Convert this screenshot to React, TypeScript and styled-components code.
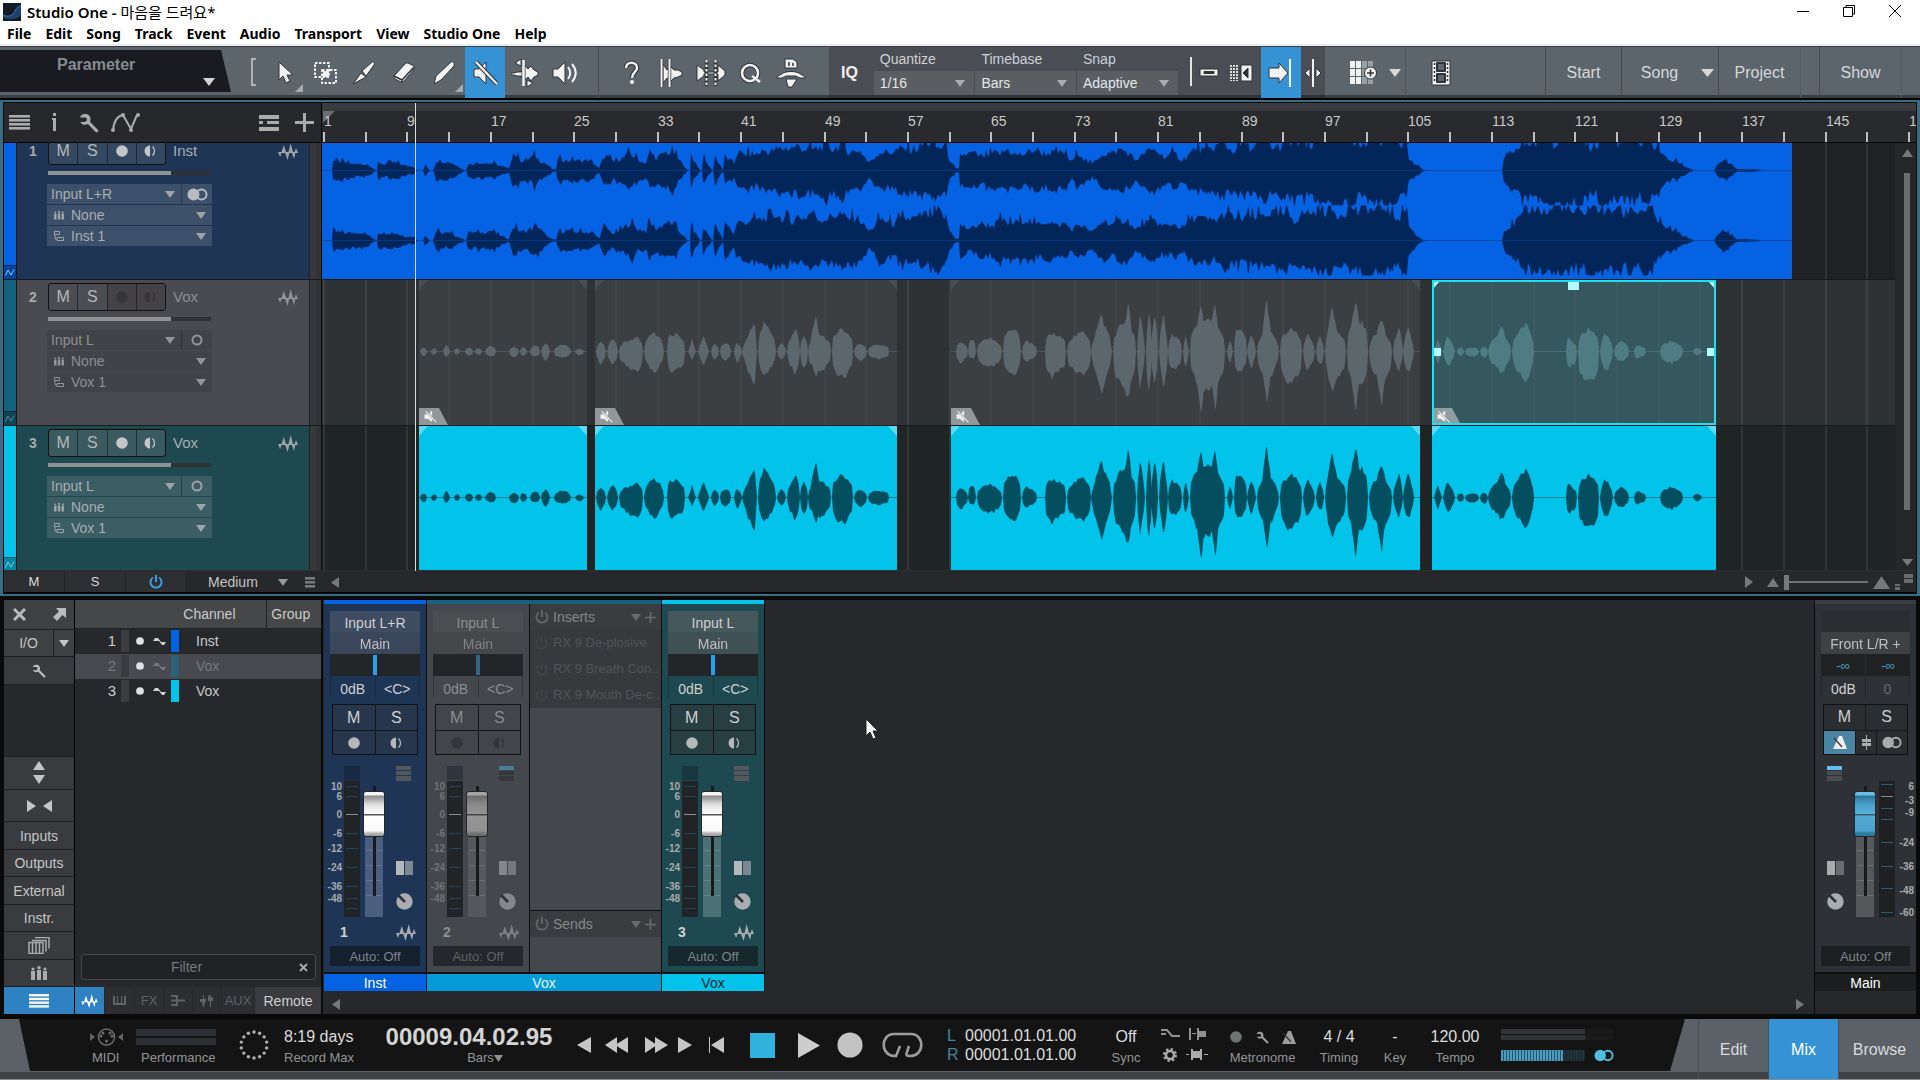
import React from "react";
import styled, { createGlobalStyle, css } from "styled-components";

const sans = `"Liberation Sans", Arial, "Noto Sans CJK KR", sans-serif`;

const GlobalStyle = createGlobalStyle`
  *, *::before, *::after { box-sizing: border-box; }
  body { margin: 0; background: #0c0c0d; }
  button, input, select { font: inherit; color: inherit; margin: 0; padding: 0; border: 0; border-radius: 0; background: none; }
  select { appearance: none; outline: none; min-width: 0; }
  svg { display: block; flex: none; }
`;

/* ---------- timeline data ---------- */

type Blob = [number, number, number, number, number?, number?];
type ClipData = { start: number; end: number; blobs: Blob[]; selected?: boolean };

const PX_PER_STEP = 83.42; // eight bars
const stepX = (n: number) => Math.round(1 + n * PX_PER_STEP);

const voxClips: ClipData[] = [
  {
    start: 97, end: 265,
    blobs: [[98, 105, 5, 5], [109, 115, 4, 4], [121, 128, 8, 7, 0.5, 0.6], [132, 138, 4, 4], [143, 151, 5, 5], [153, 160, 4, 4], [163, 174, 6, 6], [187, 197, 5, 6], [198, 205, 5, 5], [208, 218, 7, 6], [219, 228, 9, 10, 0.5, 0.5], [232, 249, 8, 8], [253, 262, 3, 4]],
  },
  {
    start: 273, end: 575,
    blobs: [[274, 284, 11, 15, 0.5, 0.5], [285, 296, 14, 15, 0.5, 0.5], [297, 321, 16, 22, 0.75], [322, 342, 22, 24, 0.5, 0.45], [345, 363, 21, 23, 0.3, 0.25], [366, 374, 13, 10, 0.5, 1], [376, 387, 18, 16, 0.5, 0.8], [389, 397, 9, 9, 0.5, 0.5], [398, 409, 10, 10], [412, 420, 10, 12, 0.4, 0.6], [420, 435, 33, 40, 0.85, 0.8], [436, 454, 32, 27, 0.35, 0.45], [455, 464, 10, 10, 0.5, 0.6], [465, 478, 25, 25, 0.65, 0.5], [478, 486, 17, 18], [486, 500, 38, 31, 0.6, 0.9], [486, 509, 21, 24, 0.5, 0.4], [510, 531, 26, 30, 0.4, 0.25], [532, 545, 9, 10], [546, 567, 8, 9, 0.5, 0.25]],
  },
  {
    start: 629, end: 1098,
    blobs: [[634, 646, 10, 13, 0.35], [646, 654, 14, 9], [655, 680, 15, 19], [681, 699, 26, 27, 0.5, 0.25], [700, 715, 12, 11, 0.3], [723, 744, 20, 28, 0.3, 0.22], [745, 769, 22, 28, 0.7, 0.3], [769, 790, 40, 48, 0.5, 0.75], [775, 789, 28, 24, 0.5, 0.3], [791, 814, 34, 46, 0.5, 0.35], [799, 811, 52, 58, 0.6, 0.6], [815, 823, 42, 40, 0.4, 0.7], [824, 830, 44, 48, 0.5, 0.5], [829, 836, 43, 34, 0.5, 0.5], [837, 846, 40, 38, 0.5, 0.6], [846, 860, 20, 22, 0.3], [861, 867, 17, 18, 0.4, 0.7], [872, 884, 60, 72, 0.62, 0.9], [868, 903, 36, 44, 0.5, 0.3], [886, 898, 58, 70, 0.6, 0.8], [905, 911, 12, 13, 0.5, 0.7], [912, 925, 28, 26, 0.3, 0.35], [925, 934, 19, 19, 0.5, 0.7], [939, 950, 60, 64, 0.55, 0.7], [935, 957, 26, 34, 0.42, 0.5], [958, 980, 25, 37, 0.5, 0.3], [981, 993, 21, 23, 0.4, 0.6], [994, 1002, 16, 16, 0.5, 0.5], [1003, 1018, 48, 52, 0.5, 0.7], [1003, 1024, 28, 36, 0.45, 0.4], [1027, 1040, 60, 68, 0.5, 0.7], [1025, 1046, 38, 42, 0.5, 0.3], [1047, 1070, 24, 36, 0.55, 0.4], [1052, 1066, 42, 58, 0.55, 0.7], [1071, 1081, 27, 22, 0.6, 0.6], [1081, 1092, 26, 26, 0.5, 0.6]],
  },
  {
    start: 1110, end: 1394, selected: true,
    blobs: [[1112, 1120, 14, 13, 0.5, 0.9], [1121, 1133, 18, 19, 0.4, 0.7], [1135, 1142, 5, 5], [1143, 1157, 5, 6], [1158, 1166, 5, 7], [1166, 1189, 20, 24, 0.6, 0.5], [1174, 1185, 32, 25, 0.5, 0.6], [1190, 1212, 31, 33, 0.6, 0.45], [1244, 1255, 14, 20, 0.2, 0.35], [1256, 1277, 26, 37, 0.5, 0.28], [1278, 1291, 22, 24, 0.4, 0.6], [1292, 1307, 11, 12], [1312, 1324, 7, 8, 0.3], [1338, 1361, 12, 13, 0.5, 0.35], [1371, 1380, 4, 4]],
  },
];

const mixEnvelope: [number, number][] = [
  [0, 0], [10, 0], [11, 13], [30, 10], [45, 8], [53, 1], [55, 0], [56, 10], [75, 9], [93, 4], [95, 0], [101, 0], [103, 7], [108, 0], [111, 0], [114, 13], [128, 11], [141, 2], [144, 0], [146, 10], [170, 12], [187, 2], [191, 21], [200, 13], [213, 21], [230, 2], [234, 1], [236, 14], [270, 12], [277, 3], [282, 21], [292, 11], [308, 24], [318, 16],
  [324, 12], [328, 28], [334, 20], [352, 24], [362, 6], [366, 0], [368, 0], [369, 22], [378, 1], [380, 1], [381, 18], [390, 1], [391, 1], [393, 22], [401, 1], [403, 24], [412, 8], [416, 27], [440, 26], [460, 32], [500, 35], [535, 30], [547, 11], [556, 28], [600, 31], [616, 35], [624, 33], [628, 12], [634, 2], [637, 2], [638, 19], [680, 25], [720, 25], [743, 21], [750, 13], [757, 25], [770, 10], [780, 23], [805, 26], [813, 12], [822, 24], [850, 24], [860, 15], [868, 26], [900, 32], [938, 34], [993, 34], [995, 41], [1085, 41], [1087, 17], [1096, 5], [1101, 1], [1107, 0],
  [1180, 0], [1182, 13], [1190, 23], [1203, 36], [1212, 41], [1330, 41], [1336, 29], [1342, 17], [1353, 13], [1363, 6], [1371, 1], [1373, 0], [1392, 0], [1396, 8], [1401, 14], [1409, 7], [1415, 2], [1438, 1], [1440, 0], [1470, 0],
];

const noise = (n: number) => {
  const s = Math.sin(n * 12.9898) * 43758.5453;
  return s - Math.floor(s);
};
const smooth = (x: number, span: number, seed: number) => {
  const i = Math.floor(x / span);
  const f = x / span - i;
  return noise(i + seed) * (1 - f) + noise(i + 1 + seed) * f;
};

const blobPath = (blobs: Blob[], offset: number, mid: number) =>
  blobs
    .map(([x0, x1, up, down, peak = 0.5, sharp = 0.35]) => {
      const top: string[] = [];
      const bottom: string[] = [];
      for (let x = x0; x <= x1; x += 1) {
        const t = (x - x0) / (x1 - x0);
        const shape = Math.pow(t < peak ? t / peak : (1 - t) / (1 - peak), sharp);
        const u = up * shape * (0.74 + 0.26 * smooth(x, 2, 9));
        const d = down * shape * (0.74 + 0.26 * smooth(x, 2, 500));
        top.push(`${x - offset},${(mid - u).toFixed(1)}`);
        bottom.unshift(`${x - offset},${(mid + d).toFixed(1)}`);
      }
      return `M${top.join("L")}L${bottom.join("L")}Z`;
    })
    .join("");

const mixPath = (mid: number, seed: number) => {
  const top: string[] = [];
  const bottom: string[] = [];
  let i = 0;
  for (let x = 0; x < 1470; x += 1) {
    while (i < mixEnvelope.length - 2 && mixEnvelope[i + 1][0] <= x) i += 1;
    const [ax, ay] = mixEnvelope[i];
    const [bx, by] = mixEnvelope[i + 1];
    const amp = ay + ((by - ay) * (x - ax)) / (bx - ax);
    const slow = smooth(x, 7, seed);
    const spike = noise(Math.floor(x / 2) + seed) > 0.9 ? 0.16 : 0;
    const u = Math.min(35, amp * (0.42 + 0.28 * slow + 0.34 * smooth(x, 2, seed) + spike));
    const d = Math.min(35, amp * (0.42 + 0.28 * slow + 0.34 * smooth(x, 2, seed + 77) + spike));
    top.push(`${x},${(mid - u).toFixed(1)}`);
    bottom.unshift(`${x},${(mid + d).toFixed(1)}`);
  }
  return `M${top.join("L")}L${bottom.join("L")}Z`;
};

/* ---------- icons ---------- */

type P = { c?: string; w?: number; h?: number };
const Caret = ({ c = "#a9abad", w = 10, h = 7 }: P) => (
  <svg width={w} height={h} viewBox="0 0 10 7" preserveAspectRatio="none"><path d="M0 0h10L5 7z" fill={c} /></svg>
);
const Tri = ({ dir, c = "#8a8c8f", w = 8, h = 11 }: P & { dir: "l" | "r" | "u" | "d" }) => {
  const d = { l: "M10 0v10L0 5z", r: "M0 0v10l10-5z", u: "M0 10h10L5 0z", d: "M0 0h10L5 10z" }[dir];
  return <svg width={w} height={h} viewBox="0 0 10 10" preserveAspectRatio="none"><path d={d} fill={c} /></svg>;
};
const WaveIcon = ({ c = "#a5a8ab", w = 20, h = 17 }: P) => (
  <svg width={w} height={h} viewBox="0 0 20 17">
    <path d="M0 9h3.800l-1.700 5zM3.200 10l2.600-8 2.600 8zM6.800 9h4.800l-2 8zM10.200 10l2.500-10 2.500 10zM13.600 9h4l-1.600 7zM16.200 10l1.800-5 2 5z" fill={c} />
  </svg>
);
const Lines = ({ c = "#a9abad", w = 21, h = 15, n = 4 }: P & { n?: number }) => (
  <svg width={w} height={h} viewBox={`0 0 20 ${n * 4 - 1}`} preserveAspectRatio="none">
    {Array.from({ length: n }, (_, i) => <rect key={i} y={i * 4} width="20" height="2.600" fill={c} />)}
  </svg>
);
const Wrench = ({ c = "#a9abad", w = 18 }: P) => (
  <svg width={w} height={w} viewBox="0 0 18 18">
    <path d="M1 4h5l1 1v2L5 8H1c2 3 5 3 7 2l7 7c2 1 3-1 2-2l-7-7c1-3 0-6-3-7-3 0-5 0-6 3z" fill={c} />
  </svg>
);
const HalfCircle = ({ c = "#b8babc" }: P) => (
  <svg width="13" height="14" viewBox="0 0 13 14"><path d="M6 1.500v11a5.500 5.500 0 0 1 0-11z" fill={c} /><path d="M8.500 2.500a6 6 0 0 1 0 9" fill="none" stroke={c} strokeWidth="1.300" /></svg>
);
const Dot = ({ c = "#b8babc", w = 12 }: P) => (
  <svg width={w} height={w} viewBox="0 0 12 12"><circle cx="6" cy="6" r="5.800" fill={c} /></svg>
);
const Stereo = ({ c = "#b8bcc0", w = 21 }: P) => (
  <svg width={w} height="13" viewBox="0 0 21 13"><circle cx="6.500" cy="6.500" r="6" fill={c} /><circle cx="14.500" cy="6.500" r="5" fill="none" stroke={c} strokeWidth="2" /></svg>
);
const Ring = ({ c = "#a9abad" }: P) => (
  <svg width="12" height="12" viewBox="0 0 12 12"><circle cx="6" cy="6" r="4.500" fill="none" stroke={c} strokeWidth="2" /></svg>
);
const Bands = ({ c = "#a9abad", w = 10, h = 10 }: P) => (
  <svg width={w} height={h} viewBox="0 0 16 14"><path d="M0 5h4v9H0zM6 4h4v10H6zM12 5h4v9h-4z" fill={c} /><circle cx="2" cy="3" r="1.600" fill={c} /><circle cx="8" cy="1.800" r="1.800" fill={c} /><circle cx="14" cy="3" r="1.600" fill={c} /></svg>
);
const Layer = ({ c = "#a9abad" }: P) => (
  <svg width="10" height="10" viewBox="0 0 10 10"><path d="M.5.500h5v3h-5zM3 6.500h6.500v3H3zM1 4v4h2" fill="none" stroke={c} /></svg>
);
const Squiggle = ({ c }: P) => (
  <svg width="10" height="7" viewBox="0 0 10 7"><path d="M.5 6.500 3 1l3 5 3-5.500" fill="none" stroke={c} /></svg>
);
const Plus = ({ c = "#a9abad", w = 19 }: P) => (
  <svg width={w} height={w} viewBox="0 0 19 19"><path d="M8 0h3v8h8v3h-8v8H8v-8H0V8h8z" fill={c} /></svg>
);
const Power = ({ c, w = 14 }: P) => (
  <svg width={w} height={w} viewBox="0 0 14 14"><path d="M4 2.500a5.500 5.500 0 1 0 6 0M7 0v7" fill="none" stroke={c} strokeWidth="2" /></svg>
);
const MuteIcon = ({ c = "#f2f2f2", w = 13 }: P) => (
  <svg width={w} height={w} viewBox="0 0 24 24"><path d="M1 8h6l8-7v21l-8-6H1z" fill={c} /><path d="M3 1l20 22" stroke="#8a9294" strokeWidth="4" /><path d="M3 2l20 21" stroke={c} strokeWidth="2" /></svg>
);
const Metro = ({ c = "#eee", w = 14 }: P) => (
  <svg width={w} height={w - 1} viewBox="0 0 14 13"><path d="M6 0h3l5 13H0z" fill={c} /><path d="M1 2l8 9" stroke="#333" strokeWidth="1.200" /></svg>
);
const Knob = ({ c = "#a9adb0" }: P) => (
  <svg width="17" height="17" viewBox="0 0 17 17"><circle cx="8.500" cy="8.500" r="8.200" fill={c} /><path d="M2 2l7 7" stroke="#2b3138" strokeWidth="2.600" /></svg>
);
const Split = ({ a = "#b4b9be", b = "#7d8791" }: { a?: string; b?: string }) => (
  <svg width="17" height="14" viewBox="0 0 17 14"><path d="M0 0h8v14H0z" fill={a} /><path d="M9 0h8v14H9z" fill={b} /></svg>
);
const Rack = ({ top = "#54585c", c = "#54585c" }: { top?: string; c?: string }) => (
  <svg width="15" height="15" viewBox="0 0 15 15"><path d="M0 0h15v4H0z" fill={top} /><path d="M0 5h15v4H0zM0 10h15v5H0z" fill={c} /></svg>
);

const Tool = ({ children, w = 26, h = 28 }: { children: React.ReactNode; w?: number; h?: number }) => (
  <svg width={w} height={h} viewBox={`0 0 ${w} ${h}`} fill="#f2f2f2" stroke="#2e3236" strokeWidth="1" strokeLinejoin="round">{children}</svg>
);

const tools = {
  arrow: <Tool><path d="M7 3v18l4-4 3 7 4-2-3-6h6z" /></Tool>,
  range: <Tool><path d="M3 4h14v14H3z" fill="none" stroke="#f2f2f2" strokeWidth="2" strokeDasharray="2.500 1.500" /><path d="M10 11h14v13H10z" fill="none" stroke="#f2f2f2" strokeWidth="2" strokeDasharray="2.500 1.500" /><path d="M11 12h6v6h-6z" stroke="none" /></Tool>,
  blade: <Tool><path d="M1 25l8-11 5 4zM10 12 20 3c2-1 3 1 2 3l-8 11z" /></Tool>,
  eraser: <Tool><path d="M2 17 13 5c1-1 2-1 3-1l6 3c1 1 1 2 0 3L12 22c-1 1-2 1-3 1l-6-3c-1-1-1-2-1-3z" /><path d="M2 17l8 4 12-13M10 21v2" fill="none" strokeWidth="1.500" /></Tool>,
  pencil: <Tool><path d="M2 25l2-8L19 3c2-1 4 1 3 4L9 21z" /></Tool>,
  mute: <Tool><path d="M2 10h5l7-7v22l-7-7H2z" /><path d="M4 3l21 22" stroke="#2e3236" strokeWidth="4.500" /><path d="M4 3l21 22" stroke="#f2f2f2" strokeWidth="2.500" /></Tool>,
  bend: <Tool w={28}><path d="M0 14h3l3-1h4l1-2v8l-1-2H6l-3-1H0zM14 6l3 4 3-3 3 4 4 2v3l-4 2-3 4-3-4-3 3z" /><path d="M10 0v7L4 4zM16 28v-7l6 3z" /><path d="M12.500 1v26" stroke="#f2f2f2" strokeWidth="2.500" /></Tool>,
  listen: <Tool><path d="M1 10h5l7-7v22l-7-7H1z" /><path d="M16 8c3 4 3 8 0 12M20 5c5 6 5 12 0 18" fill="none" stroke="#f2f2f2" strokeWidth="2" /></Tool>,
  help: <Tool><path d="M8 9c0-7 11-7 11 0 0 4-5 4-5 10" fill="none" stroke="#2e3236" strokeWidth="4.500" /><path d="M8 9c0-7 11-7 11 0 0 4-5 4-5 10" fill="none" stroke="#f2f2f2" strokeWidth="2.500" /><circle cx="14" cy="23" r="2" stroke="none" /></Tool>,
  strip: <Tool><path d="M5 5l4 6 4-3 3 3h4l4 2v3l-4 2-4 1-3 3-4-3-4 5z" /><path d="M3.500 0v28M11.500 0v28" stroke="#2e3236" strokeWidth="3.500" /><path d="M3.500 0v28M11.500 0v28" stroke="#f2f2f2" strokeWidth="2" /></Tool>,
  splitStrip: <Tool w={30}><path d="M1 6l7 5v2h14V6l7 6v4l-7 6v-7H8v2l-7 5z" /><path d="M10.500 1v26M19.500 1v26" stroke="#2e3236" strokeWidth="3.500" /><path d="M10.500 1v26M19.500 1v26" stroke="#f2f2f2" strokeWidth="2" strokeDasharray="2.500 2" /></Tool>,
  quant: <Tool><ellipse cx="12" cy="14" rx="8" ry="8" fill="none" stroke="#2e3236" strokeWidth="4.500" /><ellipse cx="12" cy="14" rx="8" ry="8" fill="none" stroke="#f2f2f2" strokeWidth="2.600" /><path d="M14 17l8 6" stroke="#f2f2f2" strokeWidth="2.500" /></Tool>,
  macro: <Tool w={30} h={30}><path d="M9 1h8l4 3v6H9z" /><path d="M13 4v4M17 5v3" strokeWidth="1.500" /><path d="M1 19c2-2 4-2 6-4 5-2 11-2 16 0 2 2 4 2 6 4v1h-5c-2-1-3-2-5-2h-8c-2 0-3 1-5 2H1zM10 21h11l-5 8h-4z" /></Tool>,
  autoscroll: <Tool><path d="M1 9h10V4l9 10-9 10v-5H1z" /><path d="M22 0v28" stroke="#f2f2f2" strokeWidth="2" /></Tool>,
  cursor: <Tool w={18}><path d="M6 9v10l-5-5zM12 9v10l5-5z" /><path d="M9 0v28" stroke="#f2f2f2" strokeWidth="2" /></Tool>,
  minus: <Tool w={20} h={9}><path d="M1 1h18v7H1z" /><path d="M5 3.500h10v2H5z" fill="#2e3236" /></Tool>,
  ripple: <Tool w={23} h={18}><path d="M1 1v16M4 1v16M7 1v16" stroke="#ddd" strokeDasharray="2 1" strokeWidth="2" /><path d="M11 1h11v16H11z" /><path d="M18 4v10l-5-5z" fill="#2e3236" /></Tool>,
  grid: <Tool w={30} h={26}><path d="M2 1h5v7H2zM8 1h5v7H8zM2 9h5v7H2zM8 9h5v7H8zM2 17h5v7H2zM8 17h5v7H8z" stroke="none" /><path d="M14 1h5v7h-5zM20 1h5v7h-5zM14 17h5v7h-5zM20 17h5v7h-5zM14 9h5v7h-5z" fill="#9a9fa4" stroke="none" /><circle cx="22.500" cy="13" r="6" /><path d="M19 13h7M22.500 9.500v7" stroke="#2e3236" strokeWidth="1.600" /></Tool>,
  film: <Tool w={20} h={26}><path d="M1 1h18v24H1z" /><path d="M6 3h8v8H6zM6 14h8v8H6z" fill="#5c646c" strokeWidth="2" /><path d="M3.500 3v20M16.500 3v20" strokeWidth="1.500" strokeDasharray="2 2" /></Tool>,
};

/* ---------- window header ---------- */

const Page = styled.div`
  display: flex; flex-direction: column; min-height: 100vh;
  background: #0a0a0b; color: #c9cacb; font-family: ${sans}; font-size: 14px; line-height: 16px;
`;
const TitleBar = styled.header`
  display: flex; align-items: center; height: 24px; padding: 0 19px 0 3px; background: #fff; color: #000;
  font: 600 15px/22px "Noto Sans", "Noto Sans CJK KR", sans-serif;
`;
const TitleText = styled.span`margin-left: 6px; span { font-weight: 400; }`;
const WindowButtons = styled.div`
  display: flex; gap: 34px; margin-left: auto;
  button { display: flex; align-items: center; height: 18px; width: 12px; padding-bottom: 2px; }
`;
const MenuBar = styled.nav`
  display: flex; gap: 14px; height: 22px; padding-left: 7px; background: #fff; color: #000; border-bottom: 2px solid #ececec;
  font: 700 14px/20px "Noto Sans", sans-serif;
  a { color: inherit; text-decoration: none; }
`;

const Toolbar = styled.div`
  display: flex; height: 54px; color: #d6d8da; background: #5c646c;
  border-top: 1px solid #3b3f44; border-bottom: 2px solid #000; box-shadow: inset 0 -3px 0 #3a3d41;
`;
const ParamWrap = styled.div`width: 231px; padding: 3px 0 6px; margin-right: 20px;`;
const ParamBox = styled.div`
  display: flex; height: 42px; padding: 6px 16px 6px 57px; justify-content: space-between;
  background: #191b20; clip-path: polygon(0 0, 221px 0, 231px 100%, 0 100%);
  color: #868b91; font-weight: 700; font-size: 16px; line-height: 18px;
  svg { align-self: flex-end; }
`;
const Bracket = styled.div`width: 5px; height: 28px; margin: 11px 9px 0 0; border: 2px solid #aeb2b5; border-right: 0;`;
const ToolGroup = styled.div`display: flex; padding-right: 13px; & + & { border-left: 1px solid #484d53; padding-left: 12px; }`;
const ToolButton = styled.button<{ $on?: boolean; $w?: number; $corner?: boolean; $line?: boolean }>`
  position: relative; display: flex; align-items: center; justify-content: center; width: ${(p) => p.$w ?? 40}px;
  background: ${(p) => (p.$on ? "#3593d5" : "none")};
  ${(p) => p.$line && css`border-left: 1px solid #4d5359;`}
  ${(p) => p.$corner && css`&::after { content: ""; position: absolute; right: 2px; bottom: 6px; border: 4px solid #a6abb0; border-left-color: transparent; border-top-color: transparent; }`}
`;
const DarkGroup = styled.div`display: flex; width: 496px; background: #4a4e54; box-shadow: inset 0 -3px 0 #303338; align-items: stretch;`;
const Iq = styled.span`font-weight: 700; font-size: 16px; color: #f0f0f0;`;
const Field = styled.div`
  display: flex; flex-direction: column; width: 102px;
  label { height: 24px; padding: 4px 0 0 6px; line-height: 16px; color: #cfd1d3; }
`;
const FieldBox = styled.div`
  display: flex; align-items: center; height: 24px; padding: 0 9px 0 6px; background: #5a5e63; border-right: 1px solid #484c51; color: #e6e7e8;
  select { flex: 1; }
`;
const ThinBar = styled.div`width: 2px; height: 29px; margin: 10px 2px 0 11px; background: #e4e4e4;`;
const PageButton = styled.button<{ $w: number }>`
  width: ${(p) => p.$w}px; font-size: 16px; color: #d6d8da; border-left: 1px solid #454a50;
`;
const Pages = styled.div`display: flex; margin-left: auto;`;
const Filler = styled.div`width: 19px; border-left: 1px solid #535a61;`;

/* ---------- arrangement ---------- */

const Arrange = styled.section`
  position: relative; display: flex; flex-direction: column; border: solid #3b6c84; border-width: 2px 3px; padding: 1px; background: #0b0c0e; margin-bottom: 4px;
`;
const TopRow = styled.div`display: flex; height: 40px; border-bottom: 1px solid #050505;`;
const HeadTools = styled.div`
  display: flex; align-items: center; gap: 21px; width: 318px; padding: 0 7px 0 5px; background: #27282b; border-right: 1px solid #000;
  button { display: flex; }
  button:nth-child(4) { margin-left: -9px; }
  button:nth-child(5) { margin-left: auto; }
  button:last-child { margin-left: -5px; }
`;
const Ruler = styled.div`position: relative; flex: 1; overflow: hidden; background: #292a2d; border-top: 8px solid #393b40;`;
const Mark = styled.span`position: absolute; bottom: 13px; padding-left: 1px; color: #c8c9ca;`;
const Tick = styled.i`position: absolute; bottom: 0; width: 2px; height: 10px; background: #bdbec0;`;
const RulerFlag = styled.i`position: absolute; left: 1px; top: 0; border-top: 12px solid #6b6d70; border-right: 12px solid transparent;`;
const Body = styled.div`display: flex; height: 427px; overflow: hidden;`;
const Tracks = styled.div`flex: 1; margin-top: -9px; min-width: 0;`;
const TrackRow = styled.div<{ $bg: string }>`display: flex; height: 146px; border-bottom: 1px solid #17191b; background: ${(p) => p.$bg};`;
const ColorBar = styled.div<{ $c: string }>`
  display: flex; flex-direction: column; justify-content: flex-end; width: 13px; background: ${(p) => p.$c}; border-right: 1px solid #15181c;
  span { display: flex; align-items: center; justify-content: center; height: 14px; background: rgba(0, 0, 0, 0.3); border-top: 1px solid rgba(0, 0, 0, 0.4); }
`;
const Head = styled.div<{ $bg: string; $dim?: boolean }>`
  display: grid; grid-template-columns: 19px 164px 1fr; grid-template-rows: 28px 4px auto; row-gap: 6px; width: 292px; padding: 3px 11px 0 12px; background: ${(p) => p.$bg};
  color: ${(p) => (p.$dim ? "#8d8f91" : "#a7adb3")}; align-content: start;
`;
const TrackNo = styled.b`line-height: 28px; color: #a7a9ab;`;
const TitleLine = styled.div`grid-column: 2 / 4; display: flex; align-items: center; font-size: 15px; > svg { margin-left: auto; }`;
const ButtonBox = styled.div<{ $bg: string; $dim?: boolean }>`
  display: flex; width: 118px; height: 28px; margin-right: 7px; border: 1px solid #111; border-radius: 3px; background: ${(p) => p.$bg};
  button { flex: 1; display: flex; align-items: center; justify-content: center; font-size: 16px; color: #b4b7b9; }
  button + button { border-left: 1px solid rgba(0, 0, 0, 0.45); }
  ${(p) => p.$dim && css`button:nth-child(n + 3) { background: rgba(60, 56, 58, 0.5); }`}
`;
const Volume = styled.input`
  grid-column: 2; appearance: none; width: 163px; height: 4px; background: linear-gradient(90deg, #8f9192 123px, #2f3135 123px);
  &::-webkit-slider-thumb { appearance: none; width: 2px; height: 4px; background: transparent; }
`;
const Routes = styled.div<{ $bg: string }>`
  grid-column: 2; display: grid; gap: 1px; margin: 3px 0 0 -1px;
  > div { display: flex; align-items: center; gap: 7px; height: 20px; padding: 0 6px 0 7px; background: ${(p) => p.$bg}; }
  > div:first-child { padding: 0; gap: 0; }
  select { flex: 1; }
`;
const InputCell = styled.span`display: flex; align-items: center; flex: 1; height: 20px; padding: 0 6px 0 4px; border-right: 1px solid rgba(20, 30, 40, 0.45);`;
const FormatCell = styled.span`display: flex; width: 30px; justify-content: center;`;
const Gutter = styled.div`width: 13px; background: #38393d; border-left: 1px solid #202225; border-right: 1px solid #08090a; box-shadow: inset -5px 0 0 #323337;`;
const Lane = styled.div`position: relative; flex: 1; overflow: hidden;`;
const GridLine = styled.i`position: absolute; top: 0; bottom: 0; width: 2px; background: rgba(120, 125, 130, 0.2);`;
const ClipBox = styled.div<{ $bg: string; $selected?: boolean }>`
  position: absolute; top: 0; bottom: 0; overflow: hidden; background: ${(p) => p.$bg};
  ${(p) => p.$selected && css`&::after { content: ""; position: absolute; inset: 0; border: 2px solid #1ee0ee; }`}
`;
const FadeL = styled.i<{ $c: string }>`position: absolute; left: 0; top: 0; border-top: 10px solid ${(p) => p.$c}; border-right: 9px solid transparent;`;
const FadeR = styled.i<{ $c: string }>`position: absolute; right: 0; top: 0; border-top: 10px solid ${(p) => p.$c}; border-left: 9px solid transparent;`;
const MuteTag = styled.span`
  position: absolute; left: 0; bottom: 0; display: flex; align-items: center; width: 29px; height: 17px; padding-left: 5px;
  background: rgba(175, 182, 184, 0.75); clip-path: polygon(0 0, 20px 0, 100% 100%, 0 100%);
`;
const Handle = styled.i<{ $at: "top" | "left" | "right" }>`
  position: absolute; width: 8px; height: 8px; background: #b3fbff;
  ${(p) => p.$at === "top" && css`top: 1px; left: calc(50% - 6px); width: 11px; height: 9px;`}
  ${(p) => p.$at === "left" && css`left: 1px; top: calc(50% - 5px);`}
  ${(p) => p.$at === "right" && css`right: 1px; top: calc(50% - 5px);`}
`;
const Playhead = styled.i`position: absolute; top: 1px; bottom: 23px; width: 1px; background: #d8dadc;`;
const VScroll = styled.div`
  display: flex; flex-direction: column; align-items: center; gap: 16px; width: 21px; padding: 6px 0 4px 3px; background: #25262a;
  span { width: 6px; height: 337px; background: #6b6c70; }
  svg:last-child { margin-top: auto; }
`;
const ArrangeFoot = styled.div`display: flex; align-items: center; height: 23px; padding-top: 1px; background: #27282c; border-bottom: 1px solid #000; border-top: 1px solid #303135;`;
const FootButton = styled.button`display: flex; align-items: center; justify-content: center; width: 61px; height: 20px; color: #dcdcdc; font-size: 13px; background: #2e2f33; border-right: 1px solid #222326;`;
const SizeSelect = styled.div`display: flex; align-items: center; width: 118px; padding: 0 17px 0 21px; color: #c3c4c5; select { flex: 1; }`;
const FootRight = styled.div`display: flex; align-items: center; gap: 5px; margin-left: auto; padding-right: 3px;`;
const Zoom = styled.input`
  appearance: none; width: 84px; height: 15px; background: linear-gradient(#6f7073, #6f7073) center / 100% 2px no-repeat;
  &::-webkit-slider-thumb { appearance: none; width: 5px; height: 15px; background: #77787b; }
`;

/* ---------- mixer ---------- */

const Mixer = styled.section`display: flex; flex: 1; margin: 0 4px 5px; min-height: 414px; background: #27282c;`;
const SideBar = styled.div`display: flex; flex-direction: column; gap: 1px; width: 70px; background: #1d1e21;`;
const SideButton = styled.button<{ $h?: number; $on?: boolean }>`
  display: flex; align-items: center; justify-content: center; gap: 7px; height: ${(p) => p.$h ?? 27}px; color: #c4c5c6;
  background: ${(p) => (p.$on ? "#2e82c2" : "#3a3b3e")};
`;
const SideSplit = styled.div<{ $h: number }>`
  display: flex; height: ${(p) => p.$h}px; background: #3e4042; color: #c4c5c6;
  button { display: flex; align-items: center; justify-content: center; flex: 1; }
`;
const Corners = styled(SideSplit)`
  justify-content: space-between; padding: 0 8px 0 9px;
  button { flex: none; }
`;
const IoButton = styled.button`border-right: 1px solid #222;`;
const CaretButton = styled.button`max-width: 20px;`;
const SideSpace = styled.div`flex: 1; background: #27282c;`;
const Bank = styled.div`display: flex; flex-direction: column; width: 249px; border-left: 1px solid #000; border-right: 2px solid #0a0a0b;`;
const BankTable = styled.table`
  width: 100%; table-layout: fixed; border-collapse: collapse; color: #c9cacb;
  th { height: 28px; padding: 0; font-weight: 400; background: #454749; border-bottom: 1px solid #222; }
  th:first-child { text-align: right; padding-right: 30px; }
  th:last-child { border-left: 1px solid #222; padding-right: 6px; }
  td { height: 25px; padding: 0; }
`;
const BankRow = styled.tr<{ $dim?: boolean }>`
  background: ${(p) => (p.$dim ? "#484a50" : "transparent")}; color: ${(p) => (p.$dim ? "#77797c" : "#c9cacb")};
`;
const BankCell = styled.div`display: flex; align-items: center; height: 25px;`;
const BankNo = styled.span`width: 41px; text-align: right; font-size: 15px;`;
const MiniMeter = styled.span`width: 8px; height: 22px; margin: 0 7px 0 5px; background: #3a3c3f;`;
const Swatch = styled.span<{ $c: string }>`width: 8px; height: 22px; margin: 0 17px 0 5px; background: ${(p) => p.$c};`;
const FilterBox = styled.label`
  display: flex; align-items: center; height: 26px; margin: auto 5px 7px 6px; padding: 0 7px 0 28px; border: 1px solid #48494c; border-radius: 3px; background: #202124;
  input { flex: 1; min-width: 0; text-align: center; outline: none; padding-right: 36px; }
  input::placeholder { color: #77787a; opacity: 1; }
`;
const BankTabs = styled.div`display: flex; gap: 1px; height: 27px;`;
const BankTab = styled.button<{ $w?: number; $on?: boolean; $lit?: boolean }>`
  display: flex; align-items: center; justify-content: center; ${(p) => (p.$w ? `width: ${p.$w}px` : "flex: 1")};
  background: ${(p) => (p.$on ? "#2e82c2" : p.$lit ? "#3a3b3e" : "#2d2e32")}; color: ${(p) => (p.$lit ? "#cfcfcf" : "#606266")};
  font-size: ${(p) => (p.$lit ? 14 : 13)}px;
`;
const Console = styled.div`display: flex; flex-direction: column; flex: 1; min-width: 0;`;
const Strips = styled.div`display: flex; flex: 1; padding-left: 1px;`;
const StripGroup = styled.div`display: flex; flex-direction: column; border-right: 1px solid #0c0d0e;`;
const StripPair = styled.div<{ $c: string }>`display: flex; flex: 1; gap: 1px; background: #0c0d0e; border-top: 4px solid ${(p) => p.$c}; border-bottom: 2px solid #111;`;
const StripName = styled.div<{ $bg: string; $fg: string }>`height: 17px; line-height: 18px; text-align: center; background: ${(p) => p.$bg}; color: ${(p) => p.$fg};`;
const Strip = styled.div<{ $bg: string; $dim?: boolean }>`
  display: flex; flex-direction: column; width: 102px; padding: 7px 6px 6px; background: ${(p) => p.$bg}; color: ${(p) => (p.$dim ? "#8b8d8f" : "#cfd0d1")};
`;
const Route = styled.button<{ $bg: string }>`display: block; height: 21px; padding-top: 2px; background: ${(p) => p.$bg}; & + & { height: 22px; filter: brightness(0.92); }`;
const Pan = styled.div<{ $c: string }>`height: 22px; background: linear-gradient(${(p) => p.$c}, ${(p) => p.$c}) center / 4px 20px no-repeat, #232629;`;
const Values = styled.div`
  display: flex; height: 21px; border: solid rgba(0, 0, 0, 0.25); border-width: 0 1px; color: inherit;
  span { flex: 1; text-align: center; line-height: 26px; }
  span + span { border-left: 1px solid rgba(0, 0, 0, 0.25); }
`;
const PeakRow = styled.div`
  display: flex; height: 22px; background: #1f2123; color: #4f9bc4; font-size: 13px;
  span { flex: 1; text-align: center; line-height: 24px; } span + span { border-left: 1px solid #303236; }
`;
const Switches = styled.div<{ $bg: string }>`
  display: grid; grid-template-columns: 1fr 1fr; height: 51px; margin: 7px 2px 11px; border: 1px solid #101214; gap: 1px; background: #14171b;
  button { display: flex; align-items: center; justify-content: center; font-size: 16px; background: ${(p) => p.$bg}; }
`;
const Three = styled.div`grid-column: 1 / 3; display: grid; grid-template-columns: 31px 20px 1fr; gap: 1px; button:first-child { background: #4a86a4; }`;
const MeterRow = styled.div`display: flex; height: 151px; margin: 0 -6px;`;
const FaderTrack = styled.div<{ $c: string }>`
  display: flex; width: 22px; margin: 0 3px; padding-top: 20px; background: linear-gradient(${(p) => p.$c}, ${(p) => p.$c}) 2px 65px / 18px 86px no-repeat;
`;
const Fader = styled.input<{ $t: string }>`
  appearance: none; writing-mode: vertical-lr; direction: rtl; width: 22px; height: 110px;
  background:
    linear-gradient(#17191b, #17191b) center / 3px 100% no-repeat,
    repeating-linear-gradient(transparent 0 14px, rgba(255, 255, 255, 0.14) 14px 15px) 3px 50px / 16px 60px no-repeat;
  &::-webkit-slider-thumb { appearance: none; width: 22px; height: 46px; border: 1px solid #24262a; border-radius: 3px; background: ${(p) => p.$t}; }
`;
const StripIcons = styled.div<{ $main?: boolean }>`
  display: flex; flex-direction: column; width: 18px; margin-left: ${(p) => (p.$main ? 12 : 8)}px; ${(p) => p.$main && "margin-right: 6px"};
  svg:nth-child(2) { margin-top: 80px; } svg:nth-child(3) { margin-top: 18px; }
`;
const NumberRow = styled.div`display: flex; align-items: center; justify-content: space-between; height: 29px; padding: 1px 4px 0 10px; font-weight: 700; svg { opacity: 0.9; }`;
const Auto = styled.button<{ $dim?: boolean }>`height: 20px; padding-top: 1px; background: rgba(15, 18, 22, 0.6); color: ${(p) => (p.$dim ? "#606264" : "#7f8488")}; font-size: 13px;`;
const Inserts = styled.div`display: flex; flex-direction: column; width: 131px; background: #44474c; color: #85878a;`;
const RackHead = styled.div`display: flex; align-items: center; gap: 4px; height: 26px; padding: 0 5px; background: #3b3c40; span { flex: 1; }`;
const RackItem = styled.div`display: flex; align-items: center; gap: 5px; height: 26px; padding: 0 0 0 5px; background: #38393d; color: #515458; font-size: 13px; white-space: nowrap;`;
const Sends = styled.div`margin-top: auto; height: 62px; border-top: 1px solid #111;`;
const HScroll = styled.div`display: flex; align-items: center; justify-content: space-between; height: 23px; padding: 3px 10px 0 9px;`;
const MainColumn = styled.div`display: flex; flex-direction: column; width: 102px; border-left: 1px solid #0a0a0b; background: #27282c; padding-bottom: 23px;`;
const Pointer = styled.div`position: fixed; left: 865px; top: 718px;`;

/* ---------- transport ---------- */

const Transport = styled.footer`
  display: flex; height: 61px; background: #5c6168; border-bottom: 1px solid #8b8b8b; box-shadow: inset 0 -7px 0 #3e4145;
`;
const Deck = styled.div`
  display: flex; flex: 1; height: 52px; padding-left: 90px; background: #141414; color: #dddedf;
  clip-path: polygon(19px 0, 100% 0, calc(100% - 15px) 100%, 30px 100%);
`;
const Cell = styled.div<{ $w: number; $left?: boolean }>`
  display: flex; flex-direction: column; align-items: ${(p) => (p.$left ? "flex-start" : "center")}; width: ${(p) => p.$w}px; font-size: 16px;
  > :first-child { height: 30px; display: flex; align-items: center; padding-top: 6px; }
`;
const Caption = styled.span`font-size: 13px; line-height: 18px; color: #929496; display: flex; align-items: center; white-space: nowrap;`;
const Clock = styled.b`font-size: 24px; color: #d4d4d4;`;
const Load = styled.span`&& { display: grid; gap: 2px; padding-top: 10px; width: 80px; align-content: start; } i { height: 7px; background: #2d3035; }`;
const Buttons = styled.div`display: flex; align-items: center; height: 52px; button { display: flex; } `;
const Gap = styled.i<{ $w: number }>`width: ${(p) => p.$w}px; flex: none;`;
const Locators = styled.div`
  display: grid; grid-template-columns: 18px auto; align-content: center; font-size: 16px; line-height: 19px; width: 163px;
  b { color: #4e7f9c; font-weight: 400; }
`;
const IconGrid = styled.div`display: grid; grid-template-columns: 34px 20px; width: 70px; justify-items: center; align-items: center; row-gap: 5px; height: 44px; padding-top: 8px;`;
const Meters = styled.div`display: flex; flex-direction: column; width: 183px; padding-top: 10px;`;
const OutRow = styled.div`display: flex; align-items: center; gap: 9px; margin-top: 8px;`;
const Stripes = styled.div`width: 84px; height: 11px; background: linear-gradient(90deg, transparent 62px, #17191bcc 62px), repeating-linear-gradient(90deg, #4b9cc0 0 2px, #27566b 2px 3px);`;
const OutBar = styled.i`width: 112px; height: 5px; margin-bottom: 1px; background: linear-gradient(90deg, #303338 84px, #1a1a1a 84px);`;
const ViewButton = styled.button<{ $w: number; $on?: boolean }>`
  width: ${(p) => p.$w}px; padding-top: 1px; font-size: 16px; color: #d9dbdc; border-left: 1px solid #4a4f55; ${(p) => p.$on && "background: #3593d5; color: #fff;"}
`;
const Views = styled.div`display: flex; margin-left: 13px;`;

/* ---------- pieces ---------- */

const Grid = () => <>{Array.from({ length: 38 }, (_, i) => <GridLine key={i} style={{ left: stepX(i / 2) }} />)}</>;

const TrackHead = ({ no, name, bg, box, route, color, input, stereo, dim }: {
  no: number; name: string; bg: string; box: string; route: string; color: string; input: string; stereo?: boolean; dim?: boolean;
}) => {
  const ic = dim ? "#929496" : "#9da3a9";
  const rec = dim ? "#35363a" : "#c3c6c9";
  return (
    <>
      <ColorBar $c={color}><span><Squiggle c={dim ? "#5e8795" : "#8cc8e8"} /></span></ColorBar>
      <Head $bg={bg} $dim={dim}>
        <TrackNo>{no}</TrackNo>
        <TitleLine>
          <ButtonBox $bg={box} $dim={dim}>
            <button>M</button><button>S</button>
            <button aria-label="Record"><Dot c={rec} w={12} /></button>
            <button aria-label="Monitor"><HalfCircle c={rec} /></button>
          </ButtonBox>
          {name}
          <WaveIcon c={ic} />
        </TitleLine>
        <Volume type="range" aria-label={`${name} ${no} volume`} defaultValue={75} />
        <Routes $bg={route}>
          <div>
            <InputCell><select aria-label="Input"><option>{input}</option></select><Caret c={ic} /></InputCell>
            <FormatCell>{stereo ? <Stereo /> : <Ring c={ic} />}</FormatCell>
          </div>
          <div><Bands c={ic} /><select aria-label="Instrument"><option>None</option></select><Caret c={ic} /></div>
          <div><Layer c={ic} /><select aria-label="Layer"><option>{name} 1</option></select><Caret c={ic} /></div>
        </Routes>
      </Head>
      <Gutter />
    </>
  );
};

const VoxLane = ({ muted }: { muted?: boolean }) => (
  <Lane>
    <Grid />
    {voxClips.map((k) => {
      const sel = muted && k.selected;
      const w = k.end - k.start;
      const wave = muted ? (sel ? "#4f7b83" : "#5b666d") : "#034e5f";
      const fade = sel ? "#b3fbff" : muted ? "#4a4d50" : "#5cdaf3";
      return (
        <ClipBox key={k.start} $bg={muted ? (sel ? "#35585e" : "#3c3f41") : "#02c4eb"} $selected={sel} style={{ left: k.start, width: w }}>
          {muted && [...Array(38)].map((_, i) => <GridLine key={i} style={{ left: stepX(i / 2) - k.start, opacity: 0.5 }} />)}
          <svg width={w} height="145" viewBox={`0 0 ${w} 145`}>
            <path d={`M0 71.500h${w}`} stroke={wave} strokeOpacity="0.6" />
            <path d={blobPath(k.blobs, k.start, 71.5)} fill={wave} />
          </svg>
          <FadeL $c={fade} /><FadeR $c={fade} />
          {muted && <MuteTag><MuteIcon /></MuteTag>}
          {sel && <><Handle $at="top" /><Handle $at="left" /><Handle $at="right" /></>}
        </ClipBox>
      );
    })}
  </Lane>
);

const scale: [string, number][] = [["10", 20], ["6", 30], ["0", 48], ["-6", 67], ["-12", 82], ["-24", 101], ["-36", 120], ["-48", 132]];
const mainScale: [string, number][] = [["6", 20], ["-3", 34], ["-9", 46], ["-24", 76], ["-36", 100], ["-48", 124], ["-60", 146]];
const mainTicks = [18, 30, 42, 53, 76, 100, 122, 146];

const MeterScale = ({ dim }: { dim?: boolean }) => (
  <svg width="36" height="151" viewBox="0 0 36 151" fontFamily={sans} fontSize="10" fontWeight="700" fill={dim ? "#707377" : "#a7abae"} textAnchor="end">
    <rect x="20" width="16" height="14" fill="rgba(10,20,35,.35)" />
    <rect x="20" y="15" width="16" height="136" fill="#212427" />
    {scale.map(([t, y]) => (
      <React.Fragment key={t}>
        <text x="18" y={y + 4}>{t}</text>
        <rect x="22" y={y} width="12" height="1" fill={t === "0" ? "#8a8e90" : "#21465a"} />
      </React.Fragment>
    ))}
    <rect x="22" y="142" width="12" height="1" fill="#21465a" />
  </svg>
);
const MainScale = () => (
  <svg width="37" height="151" viewBox="0 0 37 151" fontFamily={sans} fontSize="10" fontWeight="700" fill="#a7abae" textAnchor="end">
    <rect y="15" width="16" height="136" fill="#1e2022" />
    {mainTicks.map((y) => <rect key={y} x="2" y={y} width="12" height="1" fill={y === 30 ? "#8a8e90" : "#2a5a74"} />)}
    {mainScale.map(([t, y]) => <text key={t} x="35" y={y + 4}>{t}</text>)}
  </svg>
);

const white = "linear-gradient(#f4f4f4 0 3px, #8a8a8a 4px, #ddd 12px, #fff 22px, #555 22px 23px, #fff 24px, #fafafa 39px, #bbb 41px, #999)";
const grey = "linear-gradient(#a5a5a5 0 3px, #6c6c6c 4px, #888 12px, #959595 22px, #444 22px 23px, #959595 24px, #909090 39px, #777 41px, #666)";
const blue = "linear-gradient(#6cbce2 0 3px, #2d7398 4px, #479fca 12px, #5ab0d8 22px, #3a5a6a 22px 23px, #55aad4 24px, #4ca2cc 39px, #2f7a9f 41px, #2f7a9f)";

const Channel = ({ no, bg, input, route, sw, dim, zone }: { no: number; bg: string; input: string; route: string; sw: string; dim?: boolean; zone: string }) => {
  const rec = dim ? "#333539" : "#b5b8ba";
  return (
    <Strip $bg={bg} $dim={dim}>
      <Route $bg={route}>{input}</Route>
      <Route $bg={route}>Main</Route>
      <Pan $c={dim ? "#2f6587" : "#2b9df0"} />
      <Values><span>0dB</span><span>&lt;C&gt;</span></Values>
      <Switches $bg={sw}>
        <button>M</button><button>S</button>
        <button aria-label="Record"><Dot c={rec} /></button><button aria-label="Monitor"><HalfCircle c={rec} /></button>
      </Switches>
      <MeterRow>
        <MeterScale dim={dim} />
        <FaderTrack $c={zone}><Fader type="range" aria-label={`Channel ${no} fader`} defaultValue={92} $t={dim ? grey : white} /></FaderTrack>
        <StripIcons>
          <Rack top={dim ? "#4a7d9c" : undefined} c={dim ? "#35373a" : undefined} />
          <Split a={dim ? "#85878a" : undefined} b={dim ? "#75777a" : undefined} />
          <Knob c={dim ? "#85878a" : undefined} />
        </StripIcons>
      </MeterRow>
      <NumberRow>{no}<WaveIcon c={dim ? "#85878a" : "#b5b9bc"} /></NumberRow>
      <Auto $dim={dim}>Auto: Off</Auto>
    </Strip>
  );
};

const TildeIcon = ({ c }: P) => <svg width="13" height="9" viewBox="0 0 13 9"><path d="M0 4l2-3h3l3 4h5l-2 3H9L6 4z" fill={c} /></svg>;

const rows = [
  { no: 1, name: "Inst", c: "#0563e3" },
  { no: 2, name: "Vox", c: "#2a6378", dim: true },
  { no: 3, name: "Vox", c: "#02c4eb" },
];
const menus = ["File", "Edit", "Song", "Track", "Event", "Audio", "Transport", "View", "Studio One", "Help"];

export default function App() {
  return (
    <Page>
      <GlobalStyle />
      <TitleBar>
        <svg width="18" height="18" viewBox="0 0 18 18"><path d="M0 0h18v18H0z" fill="#131b26" /><path d="M0 12c6 3 10 0 12-4s3-5 6-5v9c-4 5-12 5-18 3z" fill="#1f3f6c" /><path d="M0 12c6 3 10 0 12-4s3-5 6-5" fill="none" stroke="#3a78b9" /></svg>
        <TitleText>Studio One - <span>마음을 드려요*</span></TitleText>
        <WindowButtons>
          <button aria-label="Minimize"><svg width="12" height="12"><path d="M0 6.500h12" stroke="#000" /></svg></button>
          <button aria-label="Restore"><svg width="12" height="12" fill="none" stroke="#000"><path d="M.5 2.500h9v9h-9zM3 2V.500h8.500V9H10" /></svg></button>
          <button aria-label="Close"><svg width="12" height="12" stroke="#000"><path d="M0 0l12 12M12 0L0 12" /></svg></button>
        </WindowButtons>
      </TitleBar>
      <MenuBar>{menus.map((m) => <a key={m} href="#menu">{m}</a>)}</MenuBar>

      <Toolbar>
        <ParamWrap><ParamBox>Parameter<Caret c="#d0d2d4" w={12} h={8} /></ParamBox></ParamWrap>
        <Bracket />
        <ToolGroup>
          <ToolButton aria-label="Arrow" $corner>{tools.arrow}</ToolButton>
          <ToolButton aria-label="Range">{tools.range}</ToolButton>
          <ToolButton aria-label="Split">{tools.blade}</ToolButton>
          <ToolButton aria-label="Eraser">{tools.eraser}</ToolButton>
          <ToolButton aria-label="Paint" $corner>{tools.pencil}</ToolButton>
          <ToolButton aria-label="Mute" $on>{tools.mute}</ToolButton>
          <ToolButton aria-label="Bend">{tools.bend}</ToolButton>
          <ToolButton aria-label="Listen">{tools.listen}</ToolButton>
        </ToolGroup>
        <ToolGroup>
          <ToolButton aria-label="Info">{tools.help}</ToolButton>
          <ToolButton aria-label="Strip silence">{tools.strip}</ToolButton>
          <ToolButton aria-label="Audio bend">{tools.splitStrip}</ToolButton>
          <ToolButton aria-label="Quantize panel">{tools.quant}</ToolButton>
          <ToolButton aria-label="Macros">{tools.macro}</ToolButton>
        </ToolGroup>
        <Gap $w={5} />
        <DarkGroup>
          <ToolButton $w={41}><Iq>IQ</Iq></ToolButton><Gap $w={4} />
          <Field><label htmlFor="quantize">Quantize</label><FieldBox><select id="quantize"><option>1/16</option></select><Caret /></FieldBox></Field>
          <Field><label htmlFor="timebase">Timebase</label><FieldBox><select id="timebase"><option>Bars</option></select><Caret /></FieldBox></Field>
          <Field><label htmlFor="snap">Snap</label><FieldBox><select id="snap"><option>Adaptive</option></select><Caret /></FieldBox></Field>
          <ThinBar />
          <ToolButton aria-label="Snap to" $w={31}>{tools.minus}</ToolButton>
          <ToolButton aria-label="Ripple edit" $w={34}>{tools.ripple}</ToolButton>
          <Gap $w={3} />
          <ToolButton aria-label="Autoscroll" $on>{tools.autoscroll}</ToolButton>
          <ToolButton aria-label="Cursor follows" $w={24}>{tools.cursor}</ToolButton>
        </DarkGroup>
        <Gap $w={16} />
        <ToolButton aria-label="Add grid" $w={44}>{tools.grid}</ToolButton>
        <ToolButton aria-label="Grid menu" $w={20}><Caret c="#d6d8da" w={12} h={8} /></ToolButton>
        <ToolButton aria-label="Video" $w={71} $line>{tools.film}</ToolButton>
        <Pages>
          <PageButton $w={76}>Start</PageButton>
          <PageButton $w={76}>Song</PageButton>
          <ToolButton aria-label="Song list" $w={21}><Caret c="#d6d8da" w={13} h={8} /></ToolButton>
          <PageButton $w={82}>Project</PageButton><Filler />
          <PageButton $w={82}>Show</PageButton><Filler />
        </Pages>
      </Toolbar>

      <Arrange>
        <TopRow>
          <HeadTools>
            <button aria-label="Track list"><Lines /></button>
            <button aria-label="Inspector"><svg width="7" height="19" viewBox="0 0 7 19"><path d="M2 0h3v3H2zM1 5h4v13H2V7H1z" fill="#a9abad" /></svg></button>
            <button aria-label="Settings"><Wrench w={20} /></button>
            <button aria-label="Automation"><svg width="29" height="19" viewBox="0 0 29 19" fill="none" stroke="#a9abad" strokeWidth="2"><path d="M2 17C3 8 6 3 12 2l8 14 6-14" /><g fill="#a9abad" stroke="none"><circle cx="2" cy="17" r="2" /><circle cx="12" cy="2" r="2" /><circle cx="20" cy="17" r="2" /><circle cx="27" cy="2" r="2" /></g></svg></button>
            <button aria-label="Arranger"><svg width="20" height="16" viewBox="0 0 20 16" fill="#a9abad"><path d="M0 0h20v4H0zM0 6h4v3H0zM8 6h12v3H8zM0 12h20v4H0z" /></svg></button>
            <button aria-label="Add track"><Plus /></button>
          </HeadTools>
          <Ruler>
            <RulerFlag />
            {Array.from({ length: 39 }, (_, i) => <Tick key={i} style={{ left: stepX(i / 2) }} />)}
            {Array.from({ length: 20 }, (_, i) => <Mark key={i} style={{ left: stepX(i) }}>{1 + i * 8}</Mark>)}
          </Ruler>
        </TopRow>
        <Body>
          <Tracks>
            <TrackRow $bg="#202125">
              <TrackHead no={1} name="Inst" bg="#1f3555" box="#344862" route="#3d5069" color="#0563e3" input="Input L+R" stereo />
              <Lane>
                <Grid />
                <ClipBox $bg="#0563e3" style={{ left: 0, width: 1470 }}>
                  <svg width="1470" height="145" viewBox="0 0 1470 145">
                    <path d={mixPath(36.5, 3)} fill="#02265a" /><path d={mixPath(106.5, 31)} fill="#02265a" />
                    <path d="M0 36.500h1470M0 106.500h1470" stroke="#0a3f8f" strokeOpacity="0.7" />
                  </svg>
                </ClipBox>
              </Lane>
            </TrackRow>
            <TrackRow $bg="#2f3235">
              <TrackHead no={2} name="Vox" bg="#494b50" box="#4c4d52" route="#424348" color="#15627f" input="Input L" dim />
              <VoxLane muted />
            </TrackRow>
            <TrackRow $bg="#1f2424">
              <TrackHead no={3} name="Vox" bg="#1f4950" box="#3a5a60" route="#3b5d64" color="#02c4eb" input="Input L" />
              <VoxLane />
            </TrackRow>
          </Tracks>
          <VScroll><Tri dir="u" w={11} h={8} c="#77787b" /><span /><Tri dir="d" w={11} h={7} c="#77787b" /></VScroll>
        </Body>
        <ArrangeFoot>
          <FootButton>M</FootButton><FootButton>S</FootButton>
          <FootButton aria-label="Power"><Power c="#3d9be0" /></FootButton>
          <SizeSelect><select aria-label="Track height"><option>Medium</option></select><Caret c="#97989a" /></SizeSelect>
          <Lines w={10} h={11} c="#77787b" n={3} /><Gap $w={16} /><Tri dir="l" c="#77787b" />
          <FootRight>
            <Tri dir="r" c="#77787b" h={12} /><Gap $w={4} /><Tri dir="u" w={12} h={9} c="#77787b" />
            <Zoom type="range" aria-label="Horizontal zoom" defaultValue={0} />
            <Tri dir="u" w={17} h={13} c="#77787b" />
            <svg width="18" height="16" viewBox="0 0 18 16" fill="#6a6b6f"><path d="M9 0h9v4H9zM9 5h9v4H9zM0 10h5v2H0zM0 13h5v3H0z" /></svg>
          </FootRight>
        </ArrangeFoot>
        <Playhead style={{ left: 319 + Math.round(8.9 * (PX_PER_STEP / 8)) }} />
      </Arrange>

      <Mixer>
        <SideBar>
          <Corners $h={29}>
            <button aria-label="Close mixer"><svg width="13" height="13" viewBox="0 0 13 13"><path d="M1 1l11 11M12 1L1 12" stroke="#b9babb" strokeWidth="3" /></svg></button>
            <button aria-label="Detach"><svg width="13" height="13" viewBox="0 0 13 13"><path d="M3 0h10v10L9.500 7 4 13 0 9l6-5.500z" fill="#b9babb" /></svg></button>
          </Corners>
          <SideSplit $h={26}><IoButton>I/O</IoButton><CaretButton aria-label="I/O menu"><Caret c="#c4c5c6" /></CaretButton></SideSplit>
          <SideButton aria-label="Setup"><Wrench c="#b9babb" w={14} /></SideButton>
          <SideSpace />
          <SideButton aria-label="Resize" $h={32}><svg width="12" height="24" viewBox="0 0 12 24"><path d="M0 9h12L6 0zM0 14h12l-6 9z" fill="#c4c5c6" /></svg></SideButton>
          <SideButton aria-label="Narrow" $h={31}><Tri dir="r" w={9} h={12} c="#c4c5c6" /><Tri dir="l" w={9} h={12} c="#c4c5c6" /></SideButton>
          <SideButton>Inputs</SideButton><SideButton $h={26}>Outputs</SideButton><SideButton>External</SideButton><SideButton $h={26}>Instr.</SideButton>
          <SideButton aria-label="Scenes"><svg width="22" height="17" viewBox="0 0 22 17" fill="none" stroke="#a9abad"><path d="M1 5.500h14v11H1zM4 3.500h14v11M7 .500h14v11M4.500 6v10M8 6v10M11.500 6v10" strokeWidth="1.500" /></svg></SideButton>
          <SideButton aria-label="Groups" $h={26}><Bands w={16} h={14} /></SideButton>
          <SideButton aria-label="Channel list" $on><Lines c="#f4f4f4" w={20} h={14} /></SideButton>
        </SideBar>
        <Bank>
          <BankTable>
            <colgroup><col /><col style={{ width: 55 }} /></colgroup>
            <thead><tr><th>Channel</th><th>Group</th></tr></thead>
            <tbody>
              {rows.map((r) => (
                <BankRow key={r.no} $dim={r.dim}>
                  <td>
                    <BankCell>
                      <BankNo>{r.no}</BankNo><MiniMeter /><Dot c="#e0e0e0" w={8} /><Gap $w={9} />
                      <TildeIcon c={r.dim ? "#77797c" : "#cfd0d1"} /><Swatch $c={r.c} />{r.name}
                    </BankCell>
                  </td>
                  <td />
                </BankRow>
              ))}
            </tbody>
          </BankTable>
          <FilterBox><input placeholder="Filter" aria-label="Filter" /><svg width="9" height="9" viewBox="0 0 9 9"><path d="M1 1l7 7M8 1L1 8" stroke="#a9abad" strokeWidth="1.800" /></svg></FilterBox>
          <BankTabs>
            <BankTab aria-label="Audio" $w={29} $on><WaveIcon c="#fff" w={17} h={14} /></BankTab>
            <BankTab aria-label="Keys" $w={29}><svg width="13" height="9" fill="#606266"><path d="M0 0h2v7h2V0h1v7h3V0h1v7h2V0h2v9H0z" /></svg></BankTab>
            <BankTab $w={28}>FX</BankTab>
            <BankTab aria-label="Bus" $w={28}><svg width="14" height="11" stroke="#606266" fill="none" strokeWidth="2"><path d="M0 1h6v9H0M0 5.500h14" /></svg></BankTab>
            <BankTab aria-label="VCA" $w={28}><svg width="14" height="12" fill="#606266"><path d="M3 0h1v4h2v3H5l-1 5H3L2 7H0V4h3zM10 2l3 0v4h-2v6h-1V6H8V2l1-2h2z" /></svg></BankTab>
            <BankTab $w={32}>AUX</BankTab>
            <BankTab $lit>Remote</BankTab>
          </BankTabs>
        </Bank>
        <Console>
          <Strips>
            <StripGroup>
              <StripPair $c="#0563e3"><Channel no={1} bg="#1f3555" input="Input L+R" route="#3f4c62" sw="#27364d" zone="#4a5f80" /></StripPair>
              <StripName $bg="#0563e3" $fg="#fff">Inst</StripName>
            </StripGroup>
            <StripGroup>
              <StripPair $c="#15627f">
                <Channel no={2} bg="#44474b" input="Input L" route="#4c4d50" sw="#424549" zone="#55585c" dim />
                <Inserts>
                  <RackHead><Power c="#606266" /><span>Inserts</span><Caret c="#67696c" /><Plus c="#67696c" w={11} /></RackHead>
                  {["RX 9 De-plosive", "RX 9 Breath Con..", "RX 9 Mouth De-c.."].map((t) => (
                    <RackItem key={t}><Power c="#414346" w={13} /><span>{t}</span></RackItem>
                  ))}
                  <Sends><RackHead><Power c="#606266" /><span>Sends</span><Caret c="#67696c" /><Plus c="#67696c" w={11} /></RackHead></Sends>
                </Inserts>
              </StripPair>
              <StripName $bg="#029bd8" $fg="#e8f4fa">Vox</StripName>
            </StripGroup>
            <StripGroup>
              <StripPair $c="#02c4eb"><Channel no={3} bg="#1f4950" input="Input L" route="#45585b" sw="#273e43" zone="#4b7075" /></StripPair>
              <StripName $bg="#02c4eb" $fg="#10262b">Vox</StripName>
            </StripGroup>
          </Strips>
          <HScroll><Tri dir="l" c="#77787b" /><Tri dir="r" c="#77787b" /></HScroll>
        </Console>
        <MainColumn>
          <StripPair $c="#3c3e42">
            <Strip $bg="#2e3236">
              <Route $bg="#2a2e31" aria-label="Main input" /><Route $bg="#444648">Front L/R +</Route>
              <PeakRow><span>-∞</span><span>-∞</span></PeakRow>
              <Values><span>0dB</span><span style={{ color: "#66696c" }}>0</span></Values>
              <Switches $bg="#2b2e31">
                <button>M</button><button>S</button>
                <Three>
                  <button aria-label="Metronome"><Metro /></button>
                  <button aria-label="Fader mode"><svg width="9" height="15" fill="#a9abad"><path d="M4 0h1v15H4zM0 4h9v3H0zM0 8h9v3H0z" /></svg></button>
                  <button aria-label="Mono"><Stereo w={20} c="#a9abad" /></button>
                </Three>
              </Switches>
              <MeterRow>
                <StripIcons $main><Rack top="#62bff0" c="#4a4d50" /><Split a="#a9abad" b="#6a6c6f" /><Knob /></StripIcons>
                <FaderTrack $c="#56585b"><Fader type="range" aria-label="Main fader" defaultValue={92} $t={blue} /></FaderTrack>
                <MainScale />
              </MeterRow>
              <NumberRow />
              <Auto>Auto: Off</Auto>
            </Strip>
          </StripPair>
          <StripName $bg="#1c1d1f" $fg="#fff">Main</StripName>
        </MainColumn>
      </Mixer>

      <Transport>
        <Deck>
          <Cell $w={46} $left>
            <span><svg width="33" height="18" viewBox="0 0 33 18" fill="#6a6c6e"><path d="M0 5v8l5-4zM33 5l-5 4 5 4z" transform="scale(1)" opacity="0.9" /><circle cx="16.500" cy="9" r="8" fill="none" stroke="#6a6c6e" strokeWidth="1.500" /><circle cx="11" cy="8" r="1.500" /><circle cx="13" cy="5" r="1.500" /><circle cx="20" cy="5" r="1.500" /><circle cx="22" cy="8" r="1.500" /><circle cx="16.500" cy="13" r="1.500" /></svg></span>
            <Caption><Gap $w={2} />MIDI</Caption>
          </Cell>
          <Cell $w={103} $left><Load><i /><i /></Load><Caption><Gap $w={5} />Performance</Caption></Cell>
          <Buttons>
            <svg width="30" height="30" viewBox="0 0 30 30" fill="#b0b1b2">
              {Array.from({ length: 14 }, (_, i) => <circle key={i} cx={15 + 13 * Math.sin((i * Math.PI) / 7)} cy={15 - 13 * Math.cos((i * Math.PI) / 7)} r="1.700" />)}
            </svg>
          </Buttons>
          <Gap $w={15} />
          <Cell $w={100} $left><span>8:19 days</span><Caption>Record Max</Caption></Cell>
          <Cell $w={170}>
            <Clock>00009.04.02.95</Clock>
            <Caption><Gap $w={32} />Bars<Caret c="#8f9193" w={9} h={7} /></Caption>
          </Cell>
          <Buttons>
            <Gap $w={23} />
            <button aria-label="Previous"><Tri dir="l" w={14} h={16} c="#c6c6c6" /></button><Gap $w={14} />
            <button aria-label="Rewind"><svg width="23" height="16" fill="#c6c6c6"><path d="M12 0v16L0 8zM23 0v16L10 8z" /></svg></button><Gap $w={17} />
            <button aria-label="Forward"><svg width="23" height="16" fill="#c6c6c6"><path d="M0 0v16l12-8zM10 0v16l13-8z" /></svg></button><Gap $w={10} />
            <button aria-label="Next"><Tri dir="r" w={14} h={16} c="#c6c6c6" /></button><Gap $w={17} />
            <button aria-label="Return to zero"><svg width="15" height="16" fill="#c6c6c6"><path d="M0 0h1v16H0zM15 0v16L2 8z" /></svg></button><Gap $w={26} />
            <button aria-label="Stop"><svg width="25" height="25"><path d="M0 0h25v25H0z" fill="#2fb2dc" /></svg></button><Gap $w={23} />
            <button aria-label="Play"><Tri dir="r" w={22} h={25} c="#cdcdcd" /></button><Gap $w={17} />
            <button aria-label="Record"><Dot w={26} c="#c3c3c3" /></button><Gap $w={19} />
            <button aria-label="Loop"><svg width="41" height="26" viewBox="0 0 41 26" fill="none" stroke="#9c9c9c" strokeWidth="2.600"><path d="M18 14l-4 10C-2 25-2 2 12 2h17c14 0 14 23-2 22-3 0-3-2-2-4l2-6" /></svg></button><Gap $w={24} />
          </Buttons>
          <Locators><b>L</b><span>00001.01.01.00</span><b>R</b><span>00001.01.01.00</span></Locators>
          <Cell $w={32}><span>Off</span><Caption>Sync</Caption></Cell>
          <Gap $w={11} />
          <IconGrid>
            <svg width="20" height="10" fill="none" stroke="#8f9193" strokeWidth="2"><path d="M1 1h6l5 6h8M1 5h5" /></svg>
            <svg width="17" height="12" fill="#8f9193"><path d="M0 0h2v12H0zM3 5h4v1H3zM8 0h2v12H8zM9 3h8v6H9z" /></svg>
            <svg width="14" height="14" viewBox="0 0 14 14"><circle cx="7" cy="7" r="4" fill="none" stroke="#a9abad" strokeWidth="2.500" /><circle cx="7" cy="7" r="6" fill="none" stroke="#a9abad" strokeWidth="2" strokeDasharray="2.400 2.300" /></svg>
            <svg width="22" height="11" fill="#a9abad"><path d="M0 5h3v1H0zM5 0h2v11H5zM14 0h2v11h-2zM6 2h9v7H6zM18 5h4v1h-4z" /></svg>
          </IconGrid>
          <Cell $w={79}>
            <span><Dot w={12} c="#6f7573" /><Gap $w={14} /><Wrench w={13} c="#9a9c9e" /><Gap $w={13} /><Metro w={14} c="#9a9c9e" /></span>
            <Caption>Metronome</Caption>
          </Cell>
          <Gap $w={12} />
          <Cell $w={50}><span>4 / 4</span><Caption>Timing</Caption></Cell>
          <Gap $w={18} />
          <Cell $w={26}><span>-</span><Caption>Key</Caption></Cell>
          <Gap $w={21} />
          <Cell $w={52}><span>120.00</span><Caption>Tempo</Caption></Cell>
          <Gap $w={20} />
          <Meters><OutBar /><OutBar /><OutRow><Stripes /><Stereo c="#52bde0" w={20} /></OutRow></Meters>
        </Deck>
        <Views><ViewButton $w={70}>Edit</ViewButton><ViewButton $w={70} $on>Mix</ViewButton><ViewButton $w={82}>Browse</ViewButton></Views>
      </Transport>
      <Pointer><svg width="15" height="22" viewBox="0 0 15 22"><path d="M1 1v17l4-4 3 7 3-1-3-7h5z" fill="#fff" stroke="#222" /></svg></Pointer>
    </Page>
  );
}
